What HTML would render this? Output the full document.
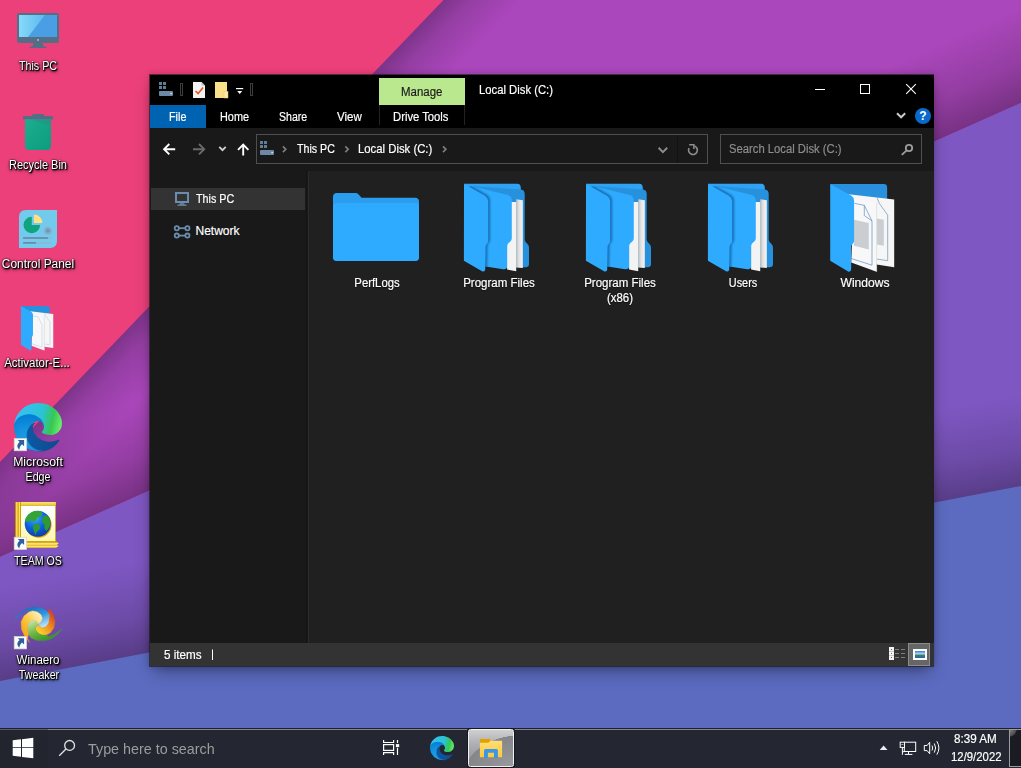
<!DOCTYPE html>
<html>
<head>
<meta charset="utf-8">
<title>Desktop</title>
<style>
*{box-sizing:border-box;margin:0;padding:0}
html,body{width:1021px;height:768px;overflow:hidden;background:#5c6bc0}
body{position:relative;font-family:"Liberation Sans",sans-serif;font-size:12px;color:#fff;-webkit-font-smoothing:antialiased}
.abs{position:absolute}
.t{position:absolute;white-space:nowrap;line-height:14px;height:14px;transform-origin:0 50%;display:block;-webkit-text-stroke:.18px}
.dl{position:absolute;white-space:nowrap;line-height:14px;height:14px;transform-origin:50% 50%;text-align:center;display:block;
  text-shadow:1px 1px 1px #000,1px 1px 2px #000,0 0 2px rgba(0,0,0,.9),0 1px 3px rgba(0,0,0,.75),1px 2px 4px rgba(0,0,0,.5)}
#win{position:absolute;left:149px;top:74px;width:785px;height:593px;background:#000;box-shadow:0 8px 16px -4px rgba(0,0,0,.38),0 0 6px rgba(0,0,0,.16);border:1px solid rgba(25,25,25,.62);border-right:0;background-clip:padding-box}
#win .in{position:absolute;left:0;top:0;width:784px;height:591px;overflow:hidden}
#task{position:absolute;left:0;top:728px;width:1021px;height:40px;background:#242631}
</style>
</head>
<body>
<!-- WALLPAPER -->
<svg class="abs" style="left:0;top:0" width="1021" height="768" viewBox="0 0 1021 768">
  <defs>
    <linearGradient id="gPinkSh" gradientUnits="userSpaceOnUse" x1="221.750" y1="231" x2="263" y2="270.600">
      <stop offset="0" stop-color="#000" stop-opacity=".27"/>
      <stop offset=".35" stop-color="#000" stop-opacity=".13"/>
      <stop offset="1" stop-color="#000" stop-opacity="0"/>
    </linearGradient>
    <linearGradient id="gVioSh" gradientUnits="userSpaceOnUse" x1="510" y1="330" x2="474" y2="249">
      <stop offset="0" stop-color="#000" stop-opacity=".30"/>
      <stop offset=".4" stop-color="#000" stop-opacity=".14"/>
      <stop offset="1" stop-color="#000" stop-opacity="0"/>
    </linearGradient>
    <linearGradient id="gBlueSh" gradientUnits="userSpaceOnUse" x1="510" y1="583.6" x2="493" y2="494">
      <stop offset="0" stop-color="#000" stop-opacity=".30"/>
      <stop offset=".4" stop-color="#000" stop-opacity=".14"/>
      <stop offset="1" stop-color="#000" stop-opacity="0"/>
    </linearGradient>
  </defs>
  <rect x="0" y="0" width="1021" height="768" fill="#ab47bc"/>
  <rect x="0" y="0" width="1021" height="768" fill="url(#gPinkSh)"/>
  <polygon points="0,0 1021,0 1021,103 0,557" fill="url(#gVioSh)" style="mix-blend-mode:normal"/>
  <polygon points="0,0 443.500,0 0,462" fill="#ec407a"/>
  <polygon points="0,557 1021,103 1021,768 0,768" fill="#7e57c2"/>
  <polygon points="0,557 1021,103 1021,768 0,768" fill="url(#gBlueSh)"/>
  <polygon points="0,681 1021,486 1021,768 0,768" fill="#5c6bc0"/>
</svg>

<!-- WINDOW -->
<div id="win"><div class="in">
  <!-- title bar + ribbon tabs : black 0..54 -->
  <div class="abs" style="left:0;top:0;width:784px;height:54px;background:#000"></div>
  <div class="abs" style="left:0;top:30px;width:56px;height:23px;background:#0063b1"></div>
  <div class="abs" style="left:229px;top:3px;width:86px;height:27px;background:#b9e88f"></div>
  <div class="abs" style="left:229px;top:30px;width:1px;height:20px;background:#232323"></div>
  <div class="abs" style="left:314px;top:30px;width:1px;height:20px;background:#232323"></div>
  <!-- nav bar -->
  <div class="abs" style="left:0;top:53px;width:784px;height:44px;background:#191919"></div>
  <div class="abs" style="left:106px;top:59px;width:452px;height:30px;border:1px solid #4f4f4f;background:#191919"></div>
  <div class="abs" style="left:527px;top:60px;width:1px;height:28px;background:#111"></div>
  <div class="abs" style="left:570px;top:59px;width:202px;height:30px;border:1px solid #4f4f4f;background:#191919"></div>
  <!-- sidebar -->
  <div class="abs" style="left:0;top:96px;width:159px;height:472px;background:#191919"></div><div class="abs" style="left:156px;top:96px;width:1px;height:472px;background:#141414"></div>
  <div class="abs" style="left:1px;top:113px;width:154px;height:22px;background:#333"></div>
  <div class="abs" style="left:158px;top:96px;width:1px;height:472px;background:#2b2b2b"></div>
  <!-- content -->
  <div class="abs" style="left:159px;top:96px;width:625px;height:472px;background:#202020"></div>
  <!-- status bar -->
  <div class="abs" style="left:0;top:568px;width:784px;height:23px;background:#333"></div>
  <div class="abs" style="left:758px;top:568px;width:22px;height:23px;background:#666;border:1px solid #8c8c8c"></div>
</div></div>

<!-- WINDOW TEXT -->
<span class="t" style="left:168.7px;top:110.1px;transform:scaleX(0.9);color:#fff;font-size:12px;">File</span>
<span class="t" style="left:219.6px;top:110.1px;transform:scaleX(0.906);color:#fff;font-size:12px;">Home</span>
<span class="t" style="left:279.4px;top:110.1px;transform:scaleX(0.88);color:#fff;font-size:12px;">Share</span>
<span class="t" style="left:337.4px;top:110.1px;transform:scaleX(0.96);color:#fff;font-size:12px;">View</span>
<span class="t" style="left:393.2px;top:110.1px;transform:scaleX(0.938);color:#fff;font-size:12px;">Drive Tools</span>
<span class="t" style="left:401.4px;top:85.1px;transform:scaleX(0.954);color:#1b1b1b;font-size:12px;">Manage</span>
<span class="t" style="left:478.5px;top:82.9px;transform:scaleX(0.94);color:#fff;font-size:12px;">Local Disk (C:)</span>
<span class="t" style="left:296.8px;top:142.1px;transform:scaleX(0.888);color:#fff;font-size:12px;">This PC</span>
<span class="t" style="left:358.4px;top:142.1px;transform:scaleX(0.944);color:#fff;font-size:12px;">Local Disk (C:)</span>
<span class="t" style="left:729px;top:142.1px;transform:scaleX(0.938);color:#8d8d8d;font-size:12px;">Search Local Disk (C:)</span>
<span class="t" style="left:195.5px;top:192.2px;transform:scaleX(0.895);color:#fff;font-size:12px;">This PC</span>
<span class="t" style="left:195.5px;top:223.8px;transform:scaleX(1.0);color:#fff;font-size:12px;">Network</span>
<span class="t" style="left:164.3px;top:648.4px;transform:scaleX(0.974);color:#fff;font-size:12px;">5 items</span>
<span class="t" style="left:317.2px;width:120px;text-align:center;transform-origin:50% 50%;top:275.9px;transform:scaleX(0.943);color:#fff;text-shadow:0 1px 1px rgba(0,0,0,.6)">PerfLogs</span>
<span class="t" style="left:439.2px;width:120px;text-align:center;transform-origin:50% 50%;top:275.9px;transform:scaleX(0.96);color:#fff;text-shadow:0 1px 1px rgba(0,0,0,.6)">Program Files</span>
<span class="t" style="left:560px;width:120px;text-align:center;transform-origin:50% 50%;top:275.9px;transform:scaleX(0.96);color:#fff;text-shadow:0 1px 1px rgba(0,0,0,.6)">Program Files</span>
<span class="t" style="left:559.7px;width:120px;text-align:center;transform-origin:50% 50%;top:291.1px;transform:scaleX(0.95);color:#fff;text-shadow:0 1px 1px rgba(0,0,0,.6)">(x86)</span>
<span class="t" style="left:683.3px;width:120px;text-align:center;transform-origin:50% 50%;top:275.9px;transform:scaleX(0.906);color:#fff;text-shadow:0 1px 1px rgba(0,0,0,.6)">Users</span>
<span class="t" style="left:804.9px;width:120px;text-align:center;transform-origin:50% 50%;top:275.9px;transform:scaleX(1.008);color:#fff;text-shadow:0 1px 1px rgba(0,0,0,.6)">Windows</span>
<!-- /WINDOW TEXT -->

<!-- WINICONS -->
<svg class="abs" style="left:0;top:0;pointer-events:none" width="1021" height="768" viewBox="0 0 1021 768" fill="none">
<g><rect x="159" y="82" width="3" height="3" fill="#5f7c99"/><rect x="163" y="82" width="3" height="3" fill="#5f7c99"/><rect x="159" y="86" width="3" height="3" fill="#5f7c99"/><rect x="163" y="86" width="3" height="3" fill="#5f7c99"/><rect x="159" y="91" width="14" height="5" rx="1" fill="#6c88a5"/><rect x="170.5" y="93" width="1.2" height="1.2" fill="#fff"/></g>
<rect x="180.5" y="83.5" width="2" height="12" stroke="#3d3d3d" stroke-width="1"/>
<rect x="250.5" y="83.5" width="2" height="12" stroke="#3d3d3d" stroke-width="1"/>
<g><path d="M193 82h8.5l3.5 3.5V98h-12z" fill="#f3f3f3"/><path d="M201.5 82v3.5h3.5z" fill="#bdbdbd"/><path d="M195.5 91l2.6 2.6 5-6" stroke="#e8531f" stroke-width="1.5" fill="none"/></g>
<g><rect x="215" y="82" width="12" height="16" fill="#fbe08a"/><rect x="224" y="91.5" width="4" height="6.5" fill="#ffeaa6" stroke="#e6c766" stroke-width=".5"/></g>
<rect x="236" y="88" width="7.2" height="1.2" fill="#fff"/><path d="M237.2 91h5l-2.5 3z" fill="#fff"/>
<rect x="815" y="89" width="10" height="1" fill="#fff"/>
<rect x="860.5" y="84.5" width="9" height="9" stroke="#fff" stroke-width="1"/>
<path d="M906.2 84.2l9.6 9.6M915.8 84.2l-9.6 9.6" stroke="#fff" stroke-width="1.1"/>
<path d="M897 113.2l4.1 4.1 4.1-4.1" stroke="#c8c8c8" stroke-width="2"/>
<circle cx="923" cy="116" r="8" fill="#0a6acb"/><text x="923" y="120.3" font-family="Liberation Sans" font-weight="700" font-size="12" fill="#fff" text-anchor="middle">?</text>
<path d="M164.200 149.200H175.200M169.300 144l-5.200 5.200 5.200 5.200" stroke="#fff" stroke-width="1.900"/>
<path d="M193 149.200h11M199 144l5.200 5.200-5.200 5.200" stroke="#6a6a6a" stroke-width="1.900"/>
<path d="M219.300 146.900l3.200 3.200 3.200-3.200" stroke="#d0d0d0" stroke-width="1.900"/>
<path d="M243.200 144.600v11M238 149.800l5.200-5.200 5.200 5.200" stroke="#fff" stroke-width="1.900"/>
<g><rect x="260" y="141" width="3" height="3" fill="#5f7c99"/><rect x="264" y="141" width="3" height="3" fill="#5f7c99"/><rect x="260" y="145" width="3" height="3" fill="#5f7c99"/><rect x="264" y="145" width="3" height="3" fill="#5f7c99"/><rect x="260" y="150" width="14" height="5" rx="1" fill="#6c88a5"/><rect x="271.5" y="152" width="1.2" height="1.2" fill="#fff"/></g>
<path d="M282.9 146.400l2.900 2.900-2.900 2.900" stroke="#7c7c7c" stroke-width="1.700"/>
<path d="M345.3 146.400l2.900 2.900-2.900 2.900" stroke="#7c7c7c" stroke-width="1.700"/>
<path d="M443.0 146.400l2.900 2.900-2.900 2.900" stroke="#7c7c7c" stroke-width="1.700"/>
<path d="M658.6 147.8l4.3 4.3 4.3-4.3" stroke="#8c8c8c" stroke-width="2"/>
<path d="M694.600 146A4.400 4.400 0 1 1 689 148.100" stroke="#8e8e8e" stroke-width="1.600"/><path d="M689.2 144.7h4.7v4.3" stroke="#8e8e8e" stroke-width="1.5"/>
<circle cx="909" cy="148" r="3.2" stroke="#9c9c9c" stroke-width="1.8"/><path d="M906.4 150.6l-4.6 4.3" stroke="#9c9c9c" stroke-width="1.9"/>
<rect x="176" y="193" width="12" height="9" stroke="#6b8cad" stroke-width="2"/><path d="M180 203.2h4l1 1.6h-6z" fill="#6b8cad"/><rect x="177.5" y="204.6" width="9" height="1.2" fill="#6b8cad"/>
<circle cx="176.8" cy="228.2" r="2.1" stroke="#6b8cad" stroke-width="1.8"/><circle cx="187.4" cy="228.2" r="2.1" stroke="#6b8cad" stroke-width="1.8"/><path d="M178.8 228.2h6.6" stroke="#6b8cad" stroke-width="1.8"/>
<circle cx="176.8" cy="235.6" r="2.1" stroke="#6b8cad" stroke-width="1.8"/><circle cx="187.4" cy="235.6" r="2.1" stroke="#6b8cad" stroke-width="1.8"/><path d="M178.8 235.6h6.6" stroke="#6b8cad" stroke-width="1.8"/>
<rect x="212" y="649.5" width="1" height="10.5" fill="#fff"/>
<rect x="889" y="647" width="5" height="13" fill="#f4f4f4"/><rect x="891" y="649" width="1" height="1" fill="#3c7a5a"/><rect x="895" y="649" width="4" height="1" fill="#7d7d7d"/><rect x="901" y="649" width="4" height="1" fill="#7d7d7d"/><rect x="891" y="653" width="1" height="1" fill="#3b78ff"/><rect x="895" y="653" width="4" height="1" fill="#7d7d7d"/><rect x="901" y="653" width="4" height="1" fill="#7d7d7d"/><rect x="891" y="657" width="1" height="1" fill="#e02020"/><rect x="895" y="657" width="4" height="1" fill="#7d7d7d"/><rect x="901" y="657" width="4" height="1" fill="#7d7d7d"/><rect x="889" y="651" width="5" height="1" fill="#c9c9c9"/><rect x="889" y="655" width="5" height="1" fill="#c9c9c9"/>
<defs><linearGradient id="pic" x1="0" y1="0" x2="0" y2="1"><stop offset="0" stop-color="#2f7fe0"/><stop offset=".45" stop-color="#bfe0f5"/><stop offset=".55" stop-color="#3f7f62"/><stop offset="1" stop-color="#2a64b0"/></linearGradient></defs><rect x="913" y="649" width="14" height="11" fill="#fdfdfd"/><rect x="915" y="651" width="10" height="7" fill="url(#pic)"/>
</svg>
<svg class="abs" style="left:0;top:0;pointer-events:none" width="1021" height="768" viewBox="0 0 1021 768">
<defs>
  <linearGradient id="pg2" x1="0" y1="0" x2="1" y2="0"><stop offset="0" stop-color="#bdbdbd"/><stop offset=".45" stop-color="#e4e4e4"/><stop offset="1" stop-color="#f6f3f1"/></linearGradient>
  <linearGradient id="fsh" gradientUnits="userSpaceOnUse" x1="23.5" y1="0" x2="28.5" y2="0"><stop offset="0" stop-color="#1668ad" stop-opacity=".8"/><stop offset=".35" stop-color="#1a6fb4" stop-opacity=".4"/><stop offset="1" stop-color="#1a6fb4" stop-opacity="0"/></linearGradient>
  <filter id="bl" x="-20%" y="-20%" width="140%" height="140%"><feGaussianBlur stdDeviation="1.1"/></filter>
  <clipPath id="mfc"><path d="M7 2L43 10.700Q47.800 12 47.800 16.500V54C47.800 58.500 43.100 58 43.100 62.500V82.500Q43 85.600 39.200 85.200L20 82.300L18 12L4 3Z"/></clipPath>
  <g id="of">
    <path d="M0 -.2H53.5Q56.6 0 56.8 3.5V16L6 6Z" fill="#2fa2f3"/>
    <path d="M7 2L57 5.6Q60.6 6 60.7 10V55C60.7 59.5 65 59 65 64V80Q65 83.3 61.5 83.3H36V16Z" fill="#2791dd"/>
    <path d="M52.2 15.2L58.8 16.2V84L52.2 83.4Z" fill="url(#pg2)"/>
    <path d="M43.1 18H52.2V87.2L43.1 85.5Z" fill="#f3f3f3"/>
    <path d="M7 2L43 10.7Q47.8 12 47.8 16.5V54C47.8 58.5 43.1 58 43.1 62.5V82.5Q43 85.6 39.2 85.2L20 82.3L18 12L4 3Z" fill="#2eabff"/>
    <g clip-path="url(#mfc)"><path d="M0 -.2L21 11.800Q24 13.800 24.200 17V56.500C24.200 60 21.600 60 21.600 63L21.200 85.500Q21 88 18.500 87.500L-.1 76.700Z" transform="translate(1.800,-1)" fill="#0d4f8e" opacity=".7" filter="url(#bl)"/></g>
    <path d="M0 -.2L21 11.8Q24 13.8 24.2 17V56.5C24.2 60 21.6 60 21.6 63L21.2 85.5Q21 88 18.5 87.5L-.1 76.7Z" fill="#2eabff"/>
  </g>
  <g id="wf">
    <path d="M.2 -.1H53.8Q57 0 57.1 3.1V20H20Z" fill="#2890dc"/>
    <path d="M18.6 10.3L64.2 15.5V83.2L46.6 80.6Z" fill="#f6f6f7"/>
    <path d="M47 13.5L49.3 19.4L57.7 31.1V76.7L46.6 75" fill="none" stroke="#6f90b3" stroke-width=".7"/>
    <path d="M46.6 34.4L53.8 35.7V61.7L46.6 60.4Z" fill="#caced3"/>
    <path d="M24.1 14.8L46.6 18.7V87.7L21.2 78.6Z" fill="#f8f8f9"/>
    <path d="M46.6 18.7V87.7" stroke="#dcdcdc" stroke-width=".8"/>
    <path d="M24.5 19.4L34.3 21.3L42 37V81.2L21.2 74.5" fill="none" stroke="#5f8fc4" stroke-width=".7"/>
    <path d="M34.3 21.3V31.5L42 37" fill="none" stroke="#5f8fc4" stroke-width=".7"/>
    <path d="M24 35.7L38.8 38.9V65.6L24 61.7Z" fill="#caced3"/>
    <path d="M.2 -.1L21.2 11.6Q24 13.5 24.1 16.8V56.5C24.1 60 21.2 60 21.2 63V85Q21.1 88 18.6 87.7L.2 76.7Z" fill="#2eabff"/>
  </g>
</defs>
<!-- PerfLogs -->
<path d="M333 197Q333 193 337 193H355.5Q357.3 193 358.4 194.2L361.6 197.7H415Q419 197.7 419 201.7V257Q419 261 415 261H337Q333 261 333 257Z" fill="#2a9dee"/>
<rect x="333" y="203" width="86" height="58" rx="4" fill="#2eabff"/>
<use href="#of" x="464" y="184"/>
<use href="#of" x="586" y="184"/>
<use href="#of" x="708" y="184"/>
<use href="#wf" x="830" y="184"/>
<g transform="translate(20.8,306.1) scale(.505)">
    <path d="M.2 -.1H53.800Q57 0 57.100 3.100V20H20Z" fill="#2890dc"/>
    <path d="M18.600 10.300L64.200 15.500V83.200L46.600 80.600Z" fill="#f6f6f7"/>
    <path d="M47 13.500L49.300 19.400L57.700 31.100V76.700L46.600 75" fill="none" stroke="#a9bfd6" stroke-width=".9"/>
    <path d="M24.100 14.800L46.600 18.700V87.700L21.200 78.600Z" fill="#f8f8f9"/>
    <path d="M46.600 18.700V87.700" stroke="#d6d6d6" stroke-width="1.2"/>
    <path d="M24.500 19.400L34.300 21.300L42 37V81.200L21.200 74.500" fill="none" stroke="#a9c3de" stroke-width=".9"/>
    <path d="M.2 -.1L21.200 11.600Q24 13.500 24.100 16.800V56.500C24.100 60 21.200 60 21.200 63V85Q21.100 88 18.600 87.700L.2 76.700Z" fill="#2eabff"/>
</g>
</svg>
<!-- /WINICONS -->

<!-- DESKTOP -->
<svg class="abs" style="left:0;top:0;pointer-events:none" width="1021" height="768" viewBox="0 0 1021 768">
<defs>
  <linearGradient id="scr" x1="0" y1="0" x2="1" y2="0"><stop offset="0" stop-color="#86d9f9"/><stop offset="1" stop-color="#5cb8ee"/></linearGradient>
  <linearGradient id="bin" x1="0" y1="0" x2="1" y2="1"><stop offset="0" stop-color="#1cae8e"/><stop offset="1" stop-color="#0c9c7e"/></linearGradient>
  <linearGradient id="e1" gradientUnits="userSpaceOnUse" x1="63" y1="177" x2="241" y2="177"><stop offset="0" stop-color="#0c59a4"/><stop offset="1" stop-color="#114a8b"/></linearGradient>
  <radialGradient id="e2" gradientUnits="userSpaceOnUse" cx="70" cy="200" r="190"><stop offset="0" stop-color="#1b9de2"/><stop offset=".3" stop-color="#1595df"/><stop offset=".67" stop-color="#0680d7"/><stop offset="1" stop-color="#0078d4"/></radialGradient>
  <linearGradient id="e3" gradientUnits="userSpaceOnUse" x1="20" y1="60" x2="250" y2="110"><stop offset="0" stop-color="#35c1f1"/><stop offset=".3" stop-color="#30c2e3"/><stop offset=".55" stop-color="#2bc3d2"/><stop offset=".8" stop-color="#36c752"/><stop offset="1" stop-color="#66eb6e"/></linearGradient>
  <g id="edge">
    <path d="M235.7 195.5a93.7 93.7 0 0 1-10.6 4.7 101.9 101.9 0 0 1-35.900 6.400c-47.300 0-88.500-32.500-88.500-74.300a31.500 31.500 0 0 1 16.400-27.300c-42.800 1.800-53.800 46.400-53.800 72.500 0 73.900 68.100 81.400 82.800 81.400 7.900 0 19.800-2.300 27-4.600l1.300-.4a128.300 128.300 0 0 0 66.600-52.800 4 4 0 0 0-5.300-5.600z" fill="url(#e1)"/>
    <path d="M105.700 241.400a79.200 79.200 0 0 1-22.700-21.300 80.700 80.700 0 0 1 29.500-119.900c3.200-1.500 8.500-4.100 15.600-4a32.400 32.400 0 0 1 25.700 13 31.900 31.900 0 0 1 6.300 18.700c0-.2 24.500-79.600-80-79.600-43.900 0-80 41.600-80 78.200a130.200 130.200 0 0 0 12.100 56 128 128 0 0 0 156.400 67 75.500 75.500 0 0 1-62.800-8z" fill="url(#e2)"/>
    <path d="M152.300 148.900c-.9 1-3.400 2.500-3.400 5.600 0 2.600 1.700 5.200 4.800 7.300 14.300 10 41.400 8.600 41.500 8.600a59.600 59.600 0 0 0 30.300-8.300 61.400 61.400 0 0 0 30.400-52.900c.3-22.400-8-37.300-11.300-43.900C223.500 24.100 178.100 0 128 0A128 128 0 0 0 0 126.200c.5-36.500 36.800-66 80-66 3.500 0 23.500.3 42 10a72.600 72.600 0 0 1 30.900 29.300c6.100 10.600 7.200 24.100 7.200 29.500s-2.700 13.300-7.800 19.900z" fill="url(#e3)"/>
  </g>
  <g id="sc">
    <rect x=".2" y=".2" width="12.4" height="12.4" fill="#fbfbfb" stroke="#d4d4c8" stroke-width=".7"/>
    <path d="M3.800 1.900H10.100V8.100L8 6.100C6.300 7.600 5.500 9.200 5.400 11.500 3 9.300 2.400 6.200 5.600 3.800Z" fill="#2e5f9e"/>
  </g>
</defs>
<!-- This PC -->
<rect x="17" y="13" width="42" height="30" rx="2" fill="#546e85"/>
<rect x="19" y="15" width="38" height="22" fill="#4a9fe4"/>
<path d="M19 15H45L28 37H19Z" fill="url(#scr)"/>
<rect x="37.300" y="39.200" width="1.500" height="1.500" fill="#c9d3dc"/>
<path d="M33.500 43h9.200l.8 3.200Q47 46.600 47 48H29.200Q29.200 46.600 32.700 46.200Z" fill="#546e85"/>
<!-- Recycle Bin -->
<rect x="32" y="114" width="12.300" height="4" rx="1.500" fill="#546e85"/>
<rect x="22.900" y="116.100" width="30.200" height="3.300" rx="1.200" fill="#546e85"/>
<path d="M25 119.300H51V145.500Q51 150 46.500 150H29.500Q25 150 25 145.500Z" fill="url(#bin)"/>
<path d="M30 119.300H51V126.500Z" fill="#2a8f84" opacity=".55"/>
<!-- Control Panel -->
<path d="M19 217Q19 210 26 210H57V241Q57 248 50 248H19Z" fill="#72caec"/>
<path d="M31.800 225V216.700A8.300 8.300 0 1 0 40.100 225Z" fill="#0fa37f"/>
<path d="M33.900 222.900V214.400A8.500 8.500 0 0 1 42.400 222.900Z" fill="#ffe082"/>
<circle cx="47.900" cy="230.700" r="4" fill="#86afcc"/><circle cx="47.900" cy="230.700" r="2" fill="#7196b4"/>
<rect x="23.100" y="237.200" width="28.700" height="1.600" fill="#8fb7d3"/><rect x="23.100" y="237.200" width="24.800" height="1.600" fill="#6b86a6"/>
<rect x="23.100" y="242.100" width="28.700" height="1.600" fill="#8fb7d3"/><rect x="23.100" y="242.100" width="12.800" height="1.600" fill="#6b86a6"/>
<!-- Edge -->
<g transform="translate(14,403) scale(.1875)"><use href="#edge"/></g>

<!-- TEAM OS book -->
<defs>
 <linearGradient id="bk1" x1="0" y1="0" x2="1" y2="0"><stop offset="0" stop-color="#c08c00"/><stop offset=".16" stop-color="#c89600"/><stop offset=".2" stop-color="#f8dc5a"/><stop offset=".4" stop-color="#f3cf45"/><stop offset=".45" stop-color="#dcaa10"/><stop offset=".62" stop-color="#e2b418"/><stop offset=".68" stop-color="#fbe88a"/><stop offset=".82" stop-color="#f6dc64"/><stop offset=".86" stop-color="#cf9c00"/><stop offset="1" stop-color="#d9a800"/></linearGradient>
 <linearGradient id="bk2" x1="0" y1="0" x2="0" y2="1"><stop offset="0" stop-color="#fbe47a"/><stop offset=".7" stop-color="#f1c93a"/><stop offset="1" stop-color="#c99a00"/></linearGradient>
 <linearGradient id="bk3" x1="0" y1="0" x2="0" y2="1"><stop offset="0" stop-color="#ffffff"/><stop offset=".35" stop-color="#fffef0"/><stop offset="1" stop-color="#fff7a6"/></linearGradient>
 <linearGradient id="bk4" x1="0" y1="0" x2="0" y2="1"><stop offset="0" stop-color="#c79400"/><stop offset=".18" stop-color="#d8aa10"/><stop offset=".25" stop-color="#fbe88a"/><stop offset=".5" stop-color="#f4d558"/><stop offset=".58" stop-color="#e0b420"/><stop offset=".75" stop-color="#fbe88a"/><stop offset=".88" stop-color="#eec840"/><stop offset="1" stop-color="#c79400"/></linearGradient>
 <radialGradient id="gl" cx=".4" cy=".28" r=".78"><stop offset="0" stop-color="#8fd6ff"/><stop offset=".18" stop-color="#2e8ff0"/><stop offset=".55" stop-color="#0a5fdc"/><stop offset="1" stop-color="#0a3aa0"/></radialGradient>
 <radialGradient id="gl2" cx=".42" cy=".28" r=".8"><stop offset="0" stop-color="#b8f0a0"/><stop offset=".3" stop-color="#3cb43c"/><stop offset="1" stop-color="#1f7a22"/></radialGradient>
 <clipPath id="glc"><circle cx="37.700" cy="523.700" r="13"/></clipPath>
</defs>
<rect x="15" y="502" width="40.800" height="46.100" rx="1" fill="#d9a800"/>
<rect x="21" y="502" width="34.800" height="3.900" fill="url(#bk2)"/>
<rect x="21" y="505.800" width="34.200" height="35.600" fill="url(#bk3)"/>
<path d="M21 541.200H56.500L58.700 543.500L57 544.500L58.600 546L56 548.100H21Z" fill="url(#bk4)"/>
<rect x="15" y="502" width="6" height="46.100" rx="1" fill="url(#bk1)"/>
<circle cx="38.600" cy="524.700" r="13" fill="#d9a400"/>
<circle cx="37.700" cy="523.700" r="13" fill="url(#gl)"/>
<g clip-path="url(#glc)" fill="url(#gl2)">
  <path d="M25 519.500C25.500 514 30 511 35 510.800L41.500 511L42 514.500L39.500 517L37.500 517.500L36.500 520.500L33 521.500L31 520L29 521.500L26 522Z" fill="#33a535"/>
  <path d="M33.500 524.500L38 524L40.500 526L39.500 529.500L36.500 532L35.500 535.500L34.500 532L33 528Z" fill="#2f9a30"/>
  <path d="M42.500 517.500L46 515L49.500 518L50.500 524L49 528L46.500 531L44.500 528.500L44.500 524.500L42 522Z" fill="#2f9a30"/>
</g>
<!-- Winaero -->
<defs>
 <linearGradient id="w1" gradientUnits="userSpaceOnUse" x1="380" y1="90" x2="480" y2="360"><stop offset="0" stop-color="#1b74c0"/><stop offset=".45" stop-color="#2f95dc"/><stop offset="1" stop-color="#b7e0f8"/></linearGradient>
 <linearGradient id="w2" gradientUnits="userSpaceOnUse" x1="640" y1="220" x2="410" y2="420"><stop offset="0" stop-color="#d8431f"/><stop offset=".45" stop-color="#ef8a1c"/><stop offset="1" stop-color="#fbd02c"/></linearGradient>
 <linearGradient id="w3" gradientUnits="userSpaceOnUse" x1="470" y1="565" x2="340" y2="280"><stop offset="0" stop-color="#3a962c"/><stop offset=".45" stop-color="#6db33f"/><stop offset="1" stop-color="#c6e2a2"/></linearGradient>
 <linearGradient id="w4" gradientUnits="userSpaceOnUse" x1="190" y1="450" x2="450" y2="250"><stop offset="0" stop-color="#f7a31b"/><stop offset=".5" stop-color="#fbc83a"/><stop offset="1" stop-color="#fdecb0"/></linearGradient>
</defs>
<g transform="translate(8,600) scale(.0729)" stroke-linejoin="round">
  <polygon points="85,272 120,220 180,165 260,115 360,92 450,105 530,150 575,200 570,260 560,320 520,370 470,385 430,360 415,330 450,300 470,250 450,200 400,165 340,150 290,148 240,152 180,187 130,237" fill="url(#w1)" stroke="url(#w1)" stroke-width="3"/>
  <polygon points="580,125 620,200 645,290 630,380 580,450 520,480 470,480 420,460 385,420 380,380 415,335 430,360 470,385 520,370 560,320 570,260 575,200 545,165" fill="url(#w2)" stroke="url(#w2)" stroke-width="6"/>
  <polygon points="740,395 680,470 600,530 500,560 400,555 320,520 280,470 265,400 270,330 300,290 350,270 395,290 415,330 380,380 385,420 420,460 470,480 520,480 560,500 640,470 700,430" fill="url(#w3)" stroke="url(#w3)" stroke-width="6"/>
  <polygon points="295,580 230,500 185,400 180,300 220,220 290,165 340,150 400,165 450,200 470,250 450,300 415,330 395,290 350,270 300,290 270,330 265,400 280,470 268,530" fill="url(#w4)" stroke="url(#w4)" stroke-width="6"/>
</g>
<use href="#sc" x="14" y="438.200"/>
<use href="#sc" x="14" y="537"/>
<use href="#sc" x="14" y="636.300"/>
</svg>
<span class="dl" style="left:-22.200000000000003px;width:120px;top:58.6px;transform:scaleX(0.895)">This PC</span>
<span class="dl" style="left:-22px;width:120px;top:157.5px;transform:scaleX(0.915)">Recycle Bin</span>
<span class="dl" style="left:-21.6px;width:120px;top:256.5px;transform:scaleX(0.995)">Control Panel</span>
<span class="dl" style="left:-23px;width:120px;top:355.6px;transform:scaleX(0.955)">Activator-E...</span>
<span class="dl" style="left:-22.1px;width:120px;top:455.3px;transform:scaleX(1.02)">Microsoft</span>
<span class="dl" style="left:-22.5px;width:120px;top:470.3px;transform:scaleX(0.89)">Edge</span>
<span class="dl" style="left:-21.799999999999997px;width:120px;top:553.5px;transform:scaleX(0.885)">TEAM OS</span>
<span class="dl" style="left:-21.799999999999997px;width:120px;top:652.8px;transform:scaleX(0.96)">Winaero</span>
<span class="dl" style="left:-21.200000000000003px;width:120px;top:667.7px;transform:scaleX(0.89)">Tweaker</span>
<!-- /DESKTOP -->

<!-- TASKBAR -->
<div id="task">
  <div class="abs" style="left:0;top:0;width:1021px;height:1px;background:#1f2029"></div>
  <div class="abs" style="left:0;top:1px;width:1021px;height:1px;background:#85868c"></div><div class="abs" style="left:0;top:1px;width:48px;height:1px;background:#5c5d63"></div><div class="abs" style="left:0;top:2px;width:48px;height:38px;background:#22242e"></div>
  <div class="abs" style="left:467px;top:0;width:48px;height:40px;border-radius:3px;background:#17181d"></div><div class="abs" style="left:468px;top:1px;width:46px;height:38px;border:1px solid #f2f2f2;border-radius:2.5px;background:radial-gradient(58px 40px at 53px 45px,#a3a4a7 0,#8e8f93 60%,#85868a 99%,rgba(133,134,138,0) 100%),linear-gradient(180deg,#cfd0d1 0%,#b1b2b5 35%,#9c9da0 70%,#98999c 100%)"></div>
</div>
<svg class="abs" style="left:0;top:0;pointer-events:none" width="1021" height="768" viewBox="0 0 1021 768" fill="none">
<!-- windows logo -->
<path d="M12.700 740.300L21 739.300V747.200H12.700Z M22 739.150L33.300 737.700V747.200H22Z M12.700 748.100H21V756.800L12.700 755.700Z M22 748.100H33.300V758.300L22 756.900Z" fill="#fff"/>
<!-- search -->
<circle cx="69.600" cy="745.400" r="4.900" stroke="#e4e4e4" stroke-width="1.300"/><path d="M66 749L59.200 755.800" stroke="#e4e4e4" stroke-width="1.300"/>
<!-- task view -->
<rect x="383.600" y="744.600" width="10" height="5.800" stroke="#fff" stroke-width="1.200"/>
<path d="M383.600 740V742.500H393.600V740M383.600 755V752.600H393.600V755" stroke="#fff" stroke-width="1.200"/>
<path d="M397.500 740V743M397.500 747.800V755" stroke="#fff" stroke-width="1.200"/><rect x="395.900" y="744.100" width="3.300" height="3" fill="#fff"/>
<!-- edge -->
<g transform="translate(430,736) scale(.09375)"><use href="#edge"/></g>
<!-- explorer -->
<defs><linearGradient id="exb" x1="0" y1="0" x2="0" y2="1"><stop offset="0" stop-color="#ffde76"/><stop offset="1" stop-color="#ffc83a"/></linearGradient></defs>
<path d="M479.900 738.900H489.700L490.900 740.800V743H479.900Z" fill="#e3a000"/>
<path d="M479.900 742.700H488.500L490.300 740.800H502.100V757.200H479.900Z" fill="url(#exb)"/>
<path d="M484 758V750.500Q484 749 485.500 749H496.400Q497.900 749 497.900 750.500V758H494V752.800H487.900V758Z" fill="#3a97e7"/>
<!-- tray -->
<path d="M883.600 745.500L887.500 750H879.700Z" fill="#ececf2"/>
<rect x="904.300" y="742.200" width="11.400" height="9.300" stroke="#fff" stroke-width="1"/>
<path d="M908.500 751.700V754.300M904.800 754.400H912.400" stroke="#fff" stroke-width="1"/>
<rect x="900.200" y="742.200" width="4.300" height="5.200" fill="#242631" stroke="#fff" stroke-width="1"/>
<path d="M901.400 744l1 1 1-1" stroke="#fff" stroke-width=".7"/>
<path d="M902.400 747.600V754.800M902.400 751.700H904.300" stroke="#fff" stroke-width="1"/>
<path d="M924.300 745.500H927.100L929.700 742.300V753.800L927.100 750.600H924.300Z" stroke="#fff" stroke-width="1"/>
<path d="M932 745.600Q933.400 748 932 750.500" stroke="#fff" stroke-width="1"/>
<path d="M934.300 743.500Q937 748 934.300 752.600" stroke="#fff" stroke-width="1"/>
<path d="M936.800 741.200Q941 748 936.800 754.700" stroke="#fff" stroke-width="1"/>
<!-- show desktop -->
<defs><radialGradient id="sdg" gradientUnits="userSpaceOnUse" cx="1009" cy="729" r="13"><stop offset="0" stop-color="#8a8a8a"/><stop offset=".55" stop-color="#4a4b50"/><stop offset=".62" stop-color="#1b1c23"/><stop offset="1" stop-color="#1b1c23"/></radialGradient></defs><rect x="1009.500" y="729.500" width="14" height="37" fill="url(#sdg)" stroke="#9c9c9c" stroke-width="1"/>
</svg>
<span class="t" style="left:87.600px;top:739.500px;height:18px;line-height:18px;font-size:15px;color:#9c9c9c;-webkit-text-stroke:0;transform:scaleX(.956)">Type here to search</span>
<span class="t" style="left:953.800px;top:732px;transform:scaleX(.972)">8:39 AM</span>
<span class="t" style="left:951.100px;top:749.600px;transform:scaleX(.946)">12/9/2022</span>
</body>
</html>
